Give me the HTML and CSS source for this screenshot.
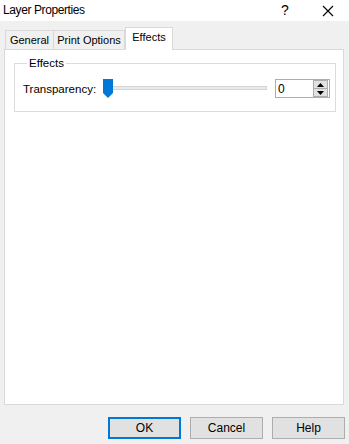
FILE: index.html
```html
<!DOCTYPE html>
<html>

<head>
    <meta name="viewport" content="width=device-width, initial-scale=1">
    <link rel="stylesheet" href="styles.css">
</head>

<body>
    <div class="dialog">
        <div class="titlebar">
            <span class="title">Layer Properties</span>
            <span class="help-q">?</span>
            <span class="close">
                <svg width="12" height="12" viewBox="0 0 12 12">
                    <path d="M1 1 L11 11 M11 1 L1 11" stroke="#000" stroke-width="1.1" fill="none"/>
                </svg>
            </span>
        </div>

        <div class="tabs">
            <div class="tab tab-general">General</div>
            <div class="tab tab-print">Print Options</div>
            <div class="tab tab-effects active">Effects</div>
        </div>

        <div class="panel">
            <fieldset class="group">
                <legend>Effects</legend>
                <div class="row">
                    <label>Transparency:</label>
                    <div class="slider">
                        <div class="track"></div>
                        <svg class="thumb" width="10" height="19" viewBox="0 0 10 19">
                            <path d="M0 0 H10 V14 L5 19 L0 14 Z" fill="#0078d7"/>
                        </svg>
                    </div>
                    <div class="spin">
                        <span class="value">0</span>
                        <div class="spin-btns">
                            <div class="spin-btn">
                                <svg width="7" height="4" viewBox="0 0 7 4"><path d="M0 4 L3.5 0 L7 4 Z" fill="#000"/></svg>
                            </div>
                            <div class="spin-btn">
                                <svg width="7" height="4" viewBox="0 0 7 4"><path d="M0 0 L3.5 4 L7 0 Z" fill="#000"/></svg>
                            </div>
                        </div>
                    </div>
                </div>
            </fieldset>
        </div>

        <div class="buttons">
            <button class="default">OK</button>
            <button>Cancel</button>
            <button>Help</button>
        </div>
    </div>
</body>

</html>
```

FILE: styles.css
```css
body {
    margin: 0;
    font-family: "Liberation Sans", Arial, sans-serif;
    font-size: 11px;
    color: #000;
    background: #f0f0f0;
}

.dialog {
    width: 349px;
    height: 444px;
    display: flex;
    flex-direction: column;
}

.titlebar {
    height: 21px;
    background: #fff;
    display: flex;
    align-items: center;
    padding-left: 3px;
}

.title {
    flex: 1;
    font-size: 12px;
    letter-spacing: -0.4px;
    margin-top: -2px;
}

.help-q {
    width: 16px;
    font-size: 14px;
    margin-right: 25px;
    margin-top: -2px;
}

.close {
    width: 12px;
    margin-right: 15px;
    display: flex;
}

.tabs {
    display: flex;
    align-items: flex-end;
    margin-top: 7px;
    padding-left: 5px;
    height: 21px;
    position: relative;
    z-index: 1;
}

.tab {
    height: 19px;
    line-height: 19px;
    text-align: center;
    border: 1px solid #d9d9d9;
    border-bottom: none;
    background: #f0f0f0;
    box-sizing: border-box;
    font-size: 11px;
}

.tab + .tab {
    border-left: none;
}

.tab-general {
    width: 49px;
}

.tab-print {
    width: 71px;
}

.tab-effects {
    width: 48px;
}

.tab.active {
    height: 23px;
    line-height: 19px;
    background: #fff;
    border-left: 1px solid #d9d9d9;
    margin-bottom: -1px;
}

.panel {
    margin: 0 5px 0 4px;
    height: 356px;
    background: #fff;
    border: 1px solid #d9d9d9;
    box-sizing: border-box;
    padding: 7px 7px 0 9px;
}

.group {
    margin: 0;
    padding: 10px 0 13px 8px;
    border: 1px solid #dcdcdc;
    min-width: 0;
}

.group legend {
    padding: 0 2px;
    margin-left: 4px;
    font-size: 11.5px;
}

.row {
    display: flex;
    align-items: center;
    height: 19px;
}

.row label {
    width: 80px;
    flex-shrink: 0;
    font-size: 11.5px;
}

.slider {
    position: relative;
    width: 164px;
    height: 19px;
    flex-shrink: 0;
}

.track {
    position: absolute;
    left: 0;
    right: 0;
    top: 7px;
    height: 2px;
    background: #e7eaea;
    border: 1px solid #d6d6d6;
}

.thumb {
    position: absolute;
    left: 0;
    top: 0;
}

.spin {
    margin-left: 8px;
    width: 55px;
    height: 19px;
    flex-shrink: 0;
    border: 1px solid #adadad;
    box-sizing: border-box;
    display: flex;
    align-items: center;
}

.value {
    flex: 1;
    padding-left: 2px;
    font-size: 12px;
}

.spin-btns {
    width: 15px;
    height: 17px;
    display: flex;
    flex-direction: column;
    margin-right: 1px;
}

.spin-btn {
    flex: 1;
    background: #e1e1e1;
    border: 1px solid #adadad;
    box-sizing: border-box;
    display: flex;
    align-items: center;
    justify-content: center;
}

.spin-btn + .spin-btn {
    border-top: none;
}

.buttons {
    display: flex;
    justify-content: flex-end;
    gap: 9px;
    padding: 12px 4px 0 0;
}

button {
    width: 73px;
    height: 22px;
    font-family: "Liberation Sans", Arial, sans-serif;
    font-size: 12px;
    background: #e1e1e1;
    border: 1px solid #adadad;
    padding: 0;
    color: #000;
}

button.default {
    border: 2px solid #0078d7;
}
```
